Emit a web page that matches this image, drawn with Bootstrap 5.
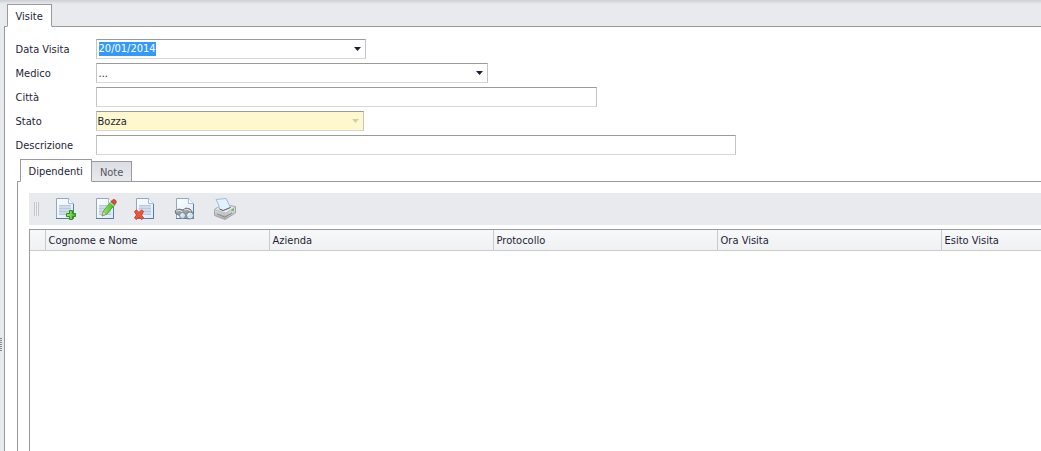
<!DOCTYPE html>
<html lang="it">
<head>
<meta charset="utf-8">
<meta name="viewport" content="width=device-width, initial-scale=1">
<title>Visite</title>
<link href="https://cdn.jsdelivr.net/npm/bootstrap@5.3.0/dist/css/bootstrap.min.css" rel="stylesheet">
<style>
body{font:11px/14px Tahoma,"DejaVu Sans Condensed",Roboto,sans-serif;background:#e9eaee;color:#1e1e36}
.topline{height:4px;background:linear-gradient(#cdced3,#e9eaee)}
.splitter{width:4px}
.grip{width:2px;height:14px;margin-top:74vh;background:repeating-linear-gradient(#85868c 0 1px,#e9eaee 1px 2px)}
.sheet{background:#fff;border-left:1px solid #999aa0;border-top:1px solid #999aa0}
.tabs{border:0;padding-left:3px}
.tabs .nav-item{margin-bottom:-1px}
.tabs .nav-link{border:1px solid #999aa0;border-left:0;border-radius:0;margin:0;padding:4px 8px 0;height:21px;color:#555660;background:linear-gradient(#dcdde3,#e9eaee);position:relative}
.tabs .nav-link.active{height:23px;border:1px solid #999aa0;border-bottom-color:#fff;background:#fff;color:#1e1e36;z-index:1;padding:5px 8px 0}
.form-area{padding:12px 11px 0}
.line{height:20px;margin-bottom:4px}
.line label{width:80px;flex:none;padding-top:1px}
.field{height:20px;min-width:0;border:1px solid #c3c4c8;border-top-color:#999a9c;border-bottom-color:#d8d8da;border-radius:0;background-color:#fff;color:#1e1e36;padding:0 2px;font:inherit;box-shadow:none;outline:0;width:100%}
select.field{padding:1px 2px 0;appearance:none;opacity:1;background:#fff url("data:image/svg+xml,%3Csvg xmlns='http://www.w3.org/2000/svg' width='7' height='4'%3E%3Cpath d='M0 0h7L3.500 4z' fill='%231e1e36'/%3E%3C/svg%3E") no-repeat right 4px top 7px}
select.field:disabled{padding:1px 1px 0;background:#fff8cf url("data:image/svg+xml,%3Csvg xmlns='http://www.w3.org/2000/svg' width='7' height='4'%3E%3Cpath d='M0 0h7L3.500 4z' fill='%23d3cca8'/%3E%3C/svg%3E") no-repeat right 4px top 7px}
.field.datebox{padding:0}
.datebox input{border:0;outline:0;padding:0 2px;background:none;font:inherit;color:inherit;min-width:0}
.datebox input::selection{background:#3399ff;color:#fff}
.datebox button{border:0;background:none;padding:0 4px;line-height:0}
.w-date{max-width:270px}.w-doc{max-width:392px}.w-city{max-width:501px}.w-state{max-width:268px}.w-desc{max-width:640px}
.inner{padding-left:12px}
.panel{border-left:1px solid #999aa0;border-top:1px solid #999aa0;padding:11px 0 0 11px}
.tools{height:32px;background:#e9eaee;padding-left:5px;margin-bottom:4px}
.handle{width:5px;height:14px;background:repeating-linear-gradient(90deg,#c3c4c9 0 1px,#f4f4f6 1px 2px);margin-right:6px}
.tools button{border:0;background:none;padding:0;width:40px;height:24px;line-height:0;text-align:center}
.gridbox{border-left:1px solid #999aa0;border-top:1px solid #999aa0;overflow:hidden}
.gridbox table{table-layout:fixed;width:1136px;border-collapse:separate;border-spacing:0}
.gridbox th,.gridbox td{font-weight:400;height:21px;padding:1px 3px 0;border-right:1px solid #c9cacf;border-bottom:1px solid #c9cacf;background:linear-gradient(#f7f8f9,#f0f1f3)}
.c0{width:16px}
</style>
</head>
<body class="d-flex flex-column vh-100 overflow-hidden">
<svg width="0" height="0" class="position-absolute" aria-hidden="true">
<defs>
<linearGradient id="paper" x2="1" y2="1"><stop stop-color="#fff"/><stop offset="1" stop-color="#dce9f6"/></linearGradient>
<linearGradient id="green"><stop stop-color="#a5ec6c"/><stop offset="1" stop-color="#39b51c"/></linearGradient>
<linearGradient id="metal" y2="1" x2="0"><stop stop-color="#f3f3f3"/><stop offset="1" stop-color="#a7a9ab"/></linearGradient>
<symbol id="doc" viewBox="0 0 24 24"><path d="M3.500 1.500h12l5 5v15h-17z" fill="url(#paper)" stroke="#93a6c6"/><path d="M20.500 7v15M3 21.500h18" stroke="#587baa"/><path d="M15.500 1.500v5h5" fill="#fff" stroke="#a9bad3"/></symbol>
<symbol id="lines" viewBox="0 0 24 24"><path d="M6 8h12v10H6z" fill="#cfdaed"/><path d="M6 8.500h12M6 11.500h12M6 14.500h12M6 17.500h12" stroke="#b9c8e1"/></symbol>
</defs>
</svg>
<div class="topline"></div>
<div class="d-flex flex-grow-1">
  <div class="splitter"><div class="grip"></div></div>
  <main class="flex-grow-1 d-flex flex-column overflow-hidden">
    <ul class="nav nav-tabs tabs">
      <li class="nav-item"><a class="nav-link active" href="#visite">Visite</a></li>
    </ul>
    <div id="visite" class="sheet flex-grow-1 d-flex flex-column">
      <form class="form-area">
        <div class="line d-flex align-items-center"><label for="data">Data Visita</label>
          <div class="field datebox w-date d-flex align-items-center"><input id="data" class="flex-grow-1" type="text" value="20/01/2014"><button type="button" aria-label="Apri calendario"><svg width="7" height="4"><path d="M0 0h7L3.500 4z" fill="#1e1e36"/></svg></button></div></div>
        <div class="line d-flex align-items-center"><label for="medico">Medico</label><select id="medico" class="field w-doc"><option>...</option></select></div>
        <div class="line d-flex align-items-center"><label for="citta">Città</label><input id="citta" type="text" class="field w-city"></div>
        <div class="line d-flex align-items-center"><label for="stato">Stato</label><select id="stato" class="field w-state" disabled><option>Bozza</option></select></div>
        <div class="line d-flex align-items-center"><label for="descrizione">Descrizione</label><input id="descrizione" type="text" class="field w-desc"></div>
      </form>
      <section class="inner flex-grow-1 d-flex flex-column">
        <ul class="nav nav-tabs tabs align-items-end">
          <li class="nav-item"><a class="nav-link active" href="#dipendenti">Dipendenti</a></li>
          <li class="nav-item"><a class="nav-link" href="#note">Note</a></li>
        </ul>
        <div id="dipendenti" class="panel flex-grow-1 d-flex flex-column">
          <div class="tools d-flex align-items-center" role="toolbar">
            <span class="handle"></span>
            <button type="button" aria-label="Nuovo"><svg width="24" height="24"><use href="#doc"/><use href="#lines"/><path d="M16.500 13.500h3v3h3v3h-3v3h-3v-3h-3v-3h3z" fill="url(#green)" stroke="#2f8c1b"/></svg></button>
            <button type="button" aria-label="Modifica"><svg width="24" height="24"><use href="#doc"/><use href="#lines"/><path d="M9 19l1.500-5L18 4.500l4 3L14 17z" fill="url(#green)" stroke="#4fae38"/><path d="M9 19l1.500-4.500 3 2.500z" fill="#efd9ac" stroke="#777" stroke-width=".5"/><path d="M18 4.500l2-2q3-.5 3.500 2.500L22 7.500z" fill="#df4936" stroke="#ad3226" stroke-width=".6"/><path d="M17 5.500l4 3" stroke="#ddd"/></svg></button>
            <button type="button" aria-label="Elimina"><svg width="24" height="24"><use href="#doc"/><use href="#lines"/><path d="M1.500 14.500l2-1.500 2.500 2.500L8.500 13l2 1.500L8.500 18l2 3-2 1.500L6 20l-2.500 2.500-2-1.500 2-3z" fill="#ef5538" stroke="#c9402b"/></svg></button>
            <button type="button" aria-label="Visualizza"><svg width="24" height="24"><use href="#doc"/><path d="M2 14l4-2 4 1 3-2 4 1 3 4-1 5-5 1-3-4-3 1-5-2z" fill="#9a9da1" stroke="#74787d"/><path d="M3 14l4-.5 3 2M11 13l4-.5 3 2" stroke="#e3e5e7" fill="none"/><circle cx="9.500" cy="18.500" r="3" fill="#cde5f3" stroke="#7b8791"/><circle cx="17" cy="18.500" r="3.500" fill="#cde5f3" stroke="#7b8791"/><path d="M15 18.500q0-2 2-2M8 18q.5-1 1.500-1" stroke="#fff" fill="none"/></svg></button>
            <button type="button" aria-label="Stampa"><svg width="24" height="24"><path d="M1.500 12.500L9 7.500l13.500 2v6.500L12 22.500l-10.500-4z" fill="url(#metal)" stroke="#a4a6a8"/><path d="M2 12.500l10.500 3.500 10-6L9 7.500z" fill="#e8e9e9" stroke="#b5b5b5" stroke-width=".7"/><path d="M3 2.500l10-1 4.500 9-7 3-4-1.500Q6 7 3 2.500z" fill="#e2f1ff" stroke="#9abedf"/><path d="M6.500 12l3.500 1.500 7.500-3" stroke="#666" fill="none"/><path d="M4 17l8 3 7-4" stroke="#8a8a8a" fill="none"/><path d="M18.500 12.500l2.500-1.200v2l-2.500 1z" fill="#58bd4a"/></svg></button>
          </div>
          <div class="gridbox flex-grow-1">
            <table><colgroup><col class="c0"><col><col><col><col><col></colgroup>
              <thead><tr><td></td><th scope="col">Cognome e Nome</th><th scope="col">Azienda</th><th scope="col">Protocollo</th><th scope="col">Ora Visita</th><th scope="col">Esito Visita</th></tr></thead>
            </table>
          </div>
        </div>
      </section>
    </div>
  </main>
</div>
<script src="https://cdn.jsdelivr.net/npm/bootstrap@5.3.0/dist/js/bootstrap.bundle.min.js"></script>
<script>
const dateField = document.getElementById('data');
dateField.focus();
dateField.select();
</script>
</body>
</html>
